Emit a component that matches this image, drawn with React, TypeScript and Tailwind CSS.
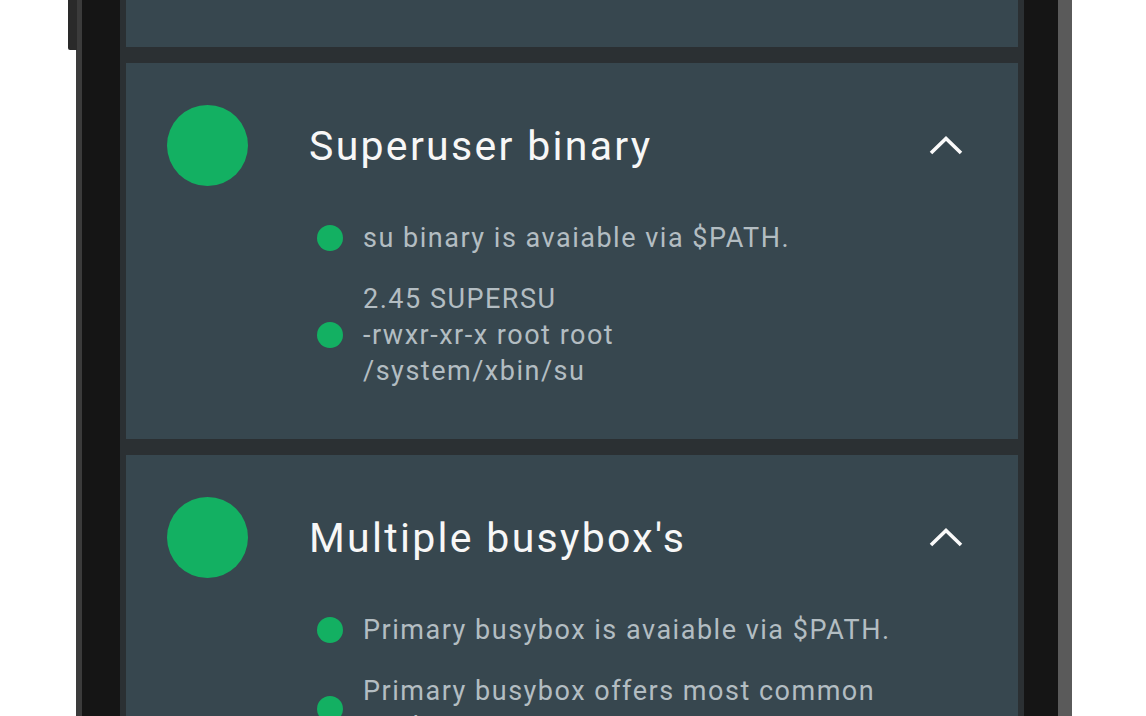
import React from 'react';

type Item = { lines: string[] };
type Check = { title: string; items: Item[] };

const CHECKS: Check[] = [
  {
    title: 'Superuser binary',
    items: [
      { lines: ['su binary is avaiable via $PATH.'] },
      { lines: ['2.45 SUPERSU', '-rwxr-xr-x root root', '/system/xbin/su'] },
    ],
  },
  {
    title: "Multiple busybox's",
    items: [
      { lines: ['Primary busybox is avaiable via $PATH.'] },
      { lines: ['Primary busybox offers most common', 'applets.'] },
    ],
  },
];

const ChevronUp = () => (
  <svg width="36" height="24" viewBox="0 0 36 24" className="block">
    <polyline points="3,19 18,4.5 33,19" fill="none" stroke="#fafafa" strokeWidth="3.6" />
  </svg>
);

const CheckCard = ({ check }: { check: Check }) => (
  <div className="bg-[#37474f] shrink-0 pt-[42px] pb-[50px] pl-[41px] pr-[54px]">
    {/* header row */}
    <div className="flex items-center h-[81px]">
      <div className="w-[81px] h-[81px] rounded-full bg-[#13b062] shrink-0" />
      <div className="ml-[61px] flex-1 text-[41px] tracking-[0.056em] leading-none text-[#f7f7f7] pt-[2px]">
        {check.title}
      </div>
      <ChevronUp />
    </div>

    {/* result lines */}
    <div className="flex flex-col gap-[25px] mt-[34px] pl-[150px]">
      {check.items.map((item, i) => (
        <div key={i} className="flex items-center">
          <div className="w-[26px] h-[26px] rounded-full bg-[#13b062] shrink-0" />
          <div className="ml-[20px] text-[27px] tracking-[0.056em] leading-[36px] text-[#b3bdc2] whitespace-nowrap">
            {item.lines.map((l) => (
              <div key={l}>{l}</div>
            ))}
          </div>
        </div>
      ))}
    </div>
  </div>
);

export default function App() {
  return (
    <div className="w-[1146px] h-[716px] bg-white overflow-hidden relative font-['Roboto',sans-serif]">
      {/* side key on the phone frame */}
      <div className="absolute left-[68px] top-0 w-[9px] h-[50px] bg-[#2a2a2a] rounded-bl-[2px]" />

      <div className="ml-[76px] w-[996px] h-full flex bg-[#151515] border-l-[6px] border-l-[#3b3b3b] border-r-[14px] border-r-[#5a5a5a]">
        <div className="ml-[38px] w-[904px] h-full bg-[#2b3033] px-[6px] flex flex-col gap-[16px] overflow-hidden">
          {/* card scrolled mostly out of view */}
          <div className="bg-[#37474f] h-[47px] shrink-0" />
          {CHECKS.map((c) => (
            <CheckCard key={c.title} check={c} />
          ))}
        </div>
      </div>
    </div>
  );
}
